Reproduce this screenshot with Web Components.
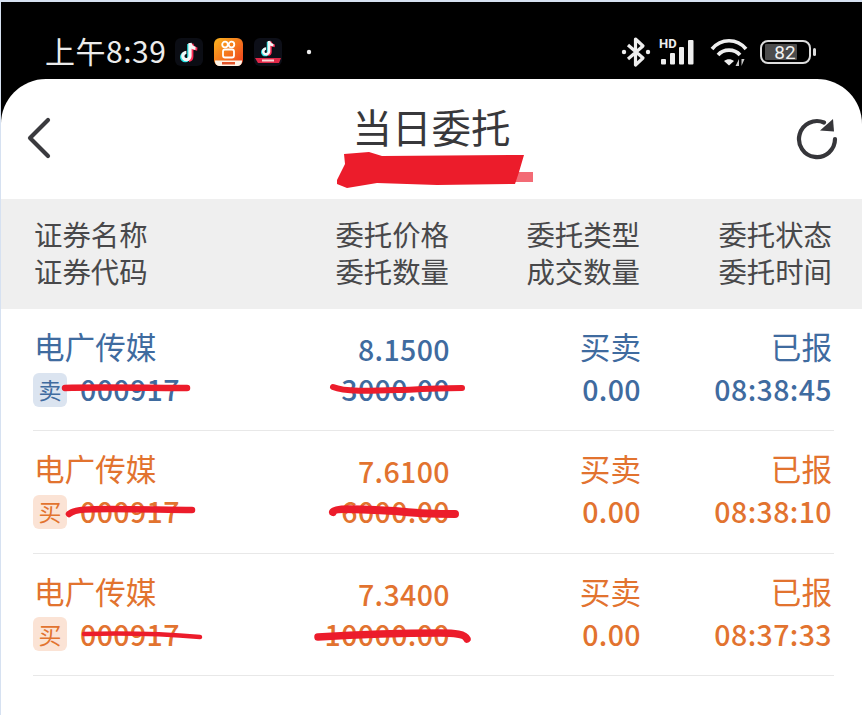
<!DOCTYPE html>
<html lang="zh"><head><meta charset="utf-8">
<style>
html,body{margin:0;padding:0;background:#d6e1f1;}
body{width:862px;height:715px;overflow:hidden;font-family:"Noto Sans CJK SC","Noto Sans",sans-serif;}
</style></head><body>
<app-screen>
  <status-bar></status-bar>
  <app-sheet>
    <nav-header></nav-header>
    <table-head></table-head>
    <order-row tone="sell" side="卖" name="电广传媒" code="000917" price="8.1500" qty="3000.00" type="买卖" done="0.00" state="已报" time="08:38:45"
      code-mark="M65 79 C95 78 150 79 187 79|6.500" qty-mark="M333 78 C345 83 370 82 400 81 C425 80 445 79 462 79|6"></order-row>
    <order-row tone="buy" side="买" name="电广传媒" code="000917" price="7.6100" qty="6000.00" type="买卖" done="0.00" state="已报" time="08:38:10"
      code-mark="M69 83 C75 78 90 78 110 78 C140 78 170 79 192 79|6.500" qty-mark="M333 81 C335 76 370 79 395 80 C420 83 440 83 455 83|8"></order-row>
    <order-row tone="buy" side="买" name="电广传媒" code="000917" price="7.3400" qty="10000.00" type="买卖" done="0.00" state="已报" time="08:37:33"
      code-mark="M84 80 C120 79 165 80 200 83|4.500" qty-mark="M318 83 C350 81 400 79 440 79 C455 79 465 80 467 85|7.500"></order-row>
  </app-sheet>
</app-screen>
<script>
const def=(n,html)=>customElements.define(n,class extends HTMLElement{
  connectedCallback(){ if(this.shadowRoot)return; const r=this.attachShadow({mode:'open'}); r.innerHTML=typeof html==='function'?html(this):html; }
});
def('app-screen',`<style>:host{display:flex;flex-direction:column;height:713px;margin:2px 0 0 1px;background:#000;}</style><slot></slot>`);
const tt=`<path d="M15 5v13a3.600 3.600 0 1 1-3.600-3.600" fill="none" stroke="#25e4e6" stroke-width="3.200" transform="translate(-1.200 1)"/><path d="M16 5c.4 3 2.500 5 5.500 5.300M16 5v13a3.600 3.600 0 0 1-3 3.500" fill="none" stroke="#fe2c55" stroke-width="3.200" transform="translate(.8 .8)"/><path d="M15 5v13a3.600 3.600 0 1 1-3.600-3.600M15 5c.4 3 2.500 5 5.500 5.300" fill="none" stroke="#f6f6f6" stroke-width="3.200"/>`;
def('status-bar',`<style>
:host{display:flex;align-items:center;box-sizing:border-box;height:77px;padding:23px 0 0 44px;color:#ececec;background:#000;flex:none}
.t{font:400 30px/36px "Noto Sans CJK SC",sans-serif;letter-spacing:.5px;width:130px;white-space:nowrap;margin-top:-4px}
svg{display:block;flex:none}
.sp{flex:1}
</style>
<span class="t">上午8:39</span>
<svg width="28" height="28" viewBox="0 0 28 28"><rect width="28" height="28" rx="6" fill="#0b0d14"/>${tt}</svg>
<svg style="margin-left:11px" width="29" height="28" viewBox="0 0 29 28"><defs><linearGradient id="k" x1="0" y1="0" x2="1" y2="1"><stop offset="0" stop-color="#fbb51f"/><stop offset="1" stop-color="#ee3a1d"/></linearGradient></defs><rect width="29" height="28" rx="6" fill="url(#k)"/><circle cx="11" cy="6.500" r="2.800" fill="none" stroke="#fff" stroke-width="1.800"/><circle cx="17.500" cy="6.500" r="2.800" fill="none" stroke="#fff" stroke-width="1.800"/><rect x="9" y="11.500" width="11" height="8" rx="2" fill="none" stroke="#fff" stroke-width="1.800"/><path d="M1 22.500h27v1a4.500 4.500 0 0 1-4.500 4.500h-18a4.500 4.500 0 0 1-4.500-4.500z" fill="#fff5e8"/><path d="M8 24h13v2.500H8z" fill="#e2542a"/></svg>
<svg style="margin-left:11px" width="28" height="28" viewBox="0 0 28 28"><rect width="28" height="28" rx="6" fill="#0d0f18"/><g transform="translate(3 -1) scale(.8)">${tt}</g><path d="M1 20h26l-2 5H4z" fill="#e02848"/><path d="M8 21.500h12v2H8z" fill="#f9d6d6"/></svg>
<svg style="margin-left:24px" width="6" height="6" viewBox="0 0 6 6"><circle cx="3" cy="3" r="2.200" fill="#eee"/></svg>
<span class="sp"></span>
<svg width="30" height="32" viewBox="0 0 30 32"><path d="M7 9l15 13-7.500 7V3L22 10 7 23" fill="none" stroke="#eee" stroke-width="3.200" stroke-linejoin="round"/><circle cx="3" cy="16" r="2.200" fill="#eee"/><circle cx="27" cy="16" r="2.200" fill="#eee"/></svg>
<svg style="margin-left:8px" width="41" height="30" viewBox="0 0 41 30"><text x="0" y="10.500" font-family="Roboto,sans-serif" font-weight="700" font-size="13" fill="#eee">HD</text><g fill="#eee"><rect x="2" y="22" width="5" height="5.500" rx="1"/><rect x="11" y="16" width="5" height="11.500" rx="1"/><rect x="20" y="10" width="5" height="17.500" rx="1"/><rect x="29" y="3" width="5.500" height="24.500" rx="1"/></g></svg>
<svg style="margin-left:10px" width="38" height="30" viewBox="0 0 38 30"><g fill="none" stroke="#eee" stroke-width="3.600"><path d="M2 12C11 1 27 1 36 12"/><path d="M8 18C13.500 11.500 24.500 11.500 30 18"/></g><path d="M14 24c3-2.500 7-2.500 10 0L19 28.500z" fill="#eee"/><path d="M29 22v7h-3.500zM31.500 29v-7h3z" fill="#ccc"/></svg>
<svg style="margin-left:12px;margin-right:46px" width="56" height="26" viewBox="0 0 56 26"><rect x="1" y="2" width="49" height="22" rx="7" fill="none" stroke="#ddd" stroke-width="2"/><rect x="5" y="5" width="32" height="16" rx="1" fill="#4c4c4c"/><text x="25" y="19.500" text-anchor="middle" font-family="Roboto,sans-serif" font-size="19" fill="#f2f2f2">82</text><rect x="53" y="9" width="3" height="8" rx="1.500" fill="#ddd"/></svg>`);
def('app-sheet',`<style>:host{display:flex;flex-direction:column;flex:1;background:#fff;border-radius:45px 45px 0 0;overflow:hidden}</style><slot></slot>`);
def('nav-header',`<style>
:host{display:block;position:relative;height:120px;flex:none;color:#333}
.bar{display:flex;justify-content:space-between;align-items:flex-start;padding:38px 24px 0 25px}
h1{margin:0;position:absolute;left:0;right:0;top:19px;text-align:center;font:400 39.500px/56px "Noto Sans CJK SC",sans-serif;color:#38383b;}
svg{display:block}
.mark{position:absolute;left:336px;top:73px}
</style>
<h1>当日委托</h1>
<div class="bar">
<svg width="26" height="42" viewBox="0 0 26 42"><path d="M22 3L4 21l18 18" fill="none" stroke="#3a3a3e" stroke-width="4.200" stroke-linecap="round" stroke-linejoin="round"/></svg>
<svg style="margin-top:1px" width="42" height="42" viewBox="0 0 42 42"><path d="M28 4.500A18 18 0 1 0 39 21" fill="none" stroke="#36363a" stroke-width="4.200" stroke-linecap="round"/><path d="M37 1L38 13.500L24 12.500z" fill="#36363a"/></svg>
</div>
<svg class="mark" width="200" height="40" viewBox="0 0 200 40"><path d="M176 20H196V30H176z" fill="#ec1c2b" opacity=".65"/><path d="M0 28L8 12L7 2L32 0L45 4L187 3L182 20L178 32L100 33L40 31L10 36L0 32z" fill="#ec1c2b"/></svg>`);
def('table-head',`<style>
:host{display:grid;grid-template-columns:224px 191px 191px 192px;box-sizing:border-box;height:110px;padding:16px 29px 0 33px;background:#efefef;color:#48484a;flex:none;font:400 28.400px/37px "Noto Sans CJK SC",sans-serif}
div+div{text-align:right}
</style>
<div>证券名称<br>证券代码</div><div>委托价格<br>委托数量</div><div>委托类型<br>成交数量</div><div>委托状态<br>委托时间</div>`);
def('order-row',h=>{
 const a=k=>h.getAttribute(k);
 const buy=a('tone')==='buy';
 const c=buy?'#e2732f':'#3f6b9f', bg=buy?'#fbe3d5':'#dbe4f0';
 const mark=v=>{const [d,w]=v.split('|');return `<path d="${d}" fill="none" stroke="#ec1c2b" stroke-width="${w}" stroke-linecap="round"/>`};
 return `<style>
:host{display:block;position:relative;height:122.400px;box-sizing:border-box;flex:none;margin:0 28px 0 32px;border-bottom:1px solid #e8e8e8;color:${c};font-family:"Noto Sans CJK SC",sans-serif}
.g{display:grid;grid-template-columns:225px 191px 191px 191px;padding:21px 0 0 1px;width:799px;}
.cell{display:flex;flex-direction:column;gap:2px}
.cell+.cell{align-items:flex-end}
.a,.b{height:38px;line-height:38px;white-space:nowrap;display:flex;align-items:center;box-sizing:border-box}
.a{font-size:30.600px}
.a:not(.n){padding-bottom:6px}
.n{font-size:28.500px;font-weight:500;letter-spacing:.4px}
.tag{display:inline-flex;align-items:center;justify-content:center;width:34px;height:34px;margin:1px 13px 0 -1px;border-radius:6px;background:${bg};font:400 23px/1 "Noto Sans CJK SC",sans-serif;letter-spacing:0}
svg{position:absolute;left:-33px;top:0;overflow:visible;pointer-events:none}
</style>
<div class="g">
<div class="cell"><div class="a">${a('name')}</div><div class="b n"><span class="tag">${a('side')}</span>${a('code')}</div></div>
<div class="cell"><div class="a n">${a('price')}</div><div class="b n">${a('qty')}</div></div>
<div class="cell"><div class="a">${a('type')}</div><div class="b n">${a('done')}</div></div>
<div class="cell"><div class="a">${a('state')}</div><div class="b n">${a('time')}</div></div>
</div>
<svg width="862" height="122">${mark(a('code-mark'))}${mark(a('qty-mark'))}</svg>`;
});
</script>
</body></html>
